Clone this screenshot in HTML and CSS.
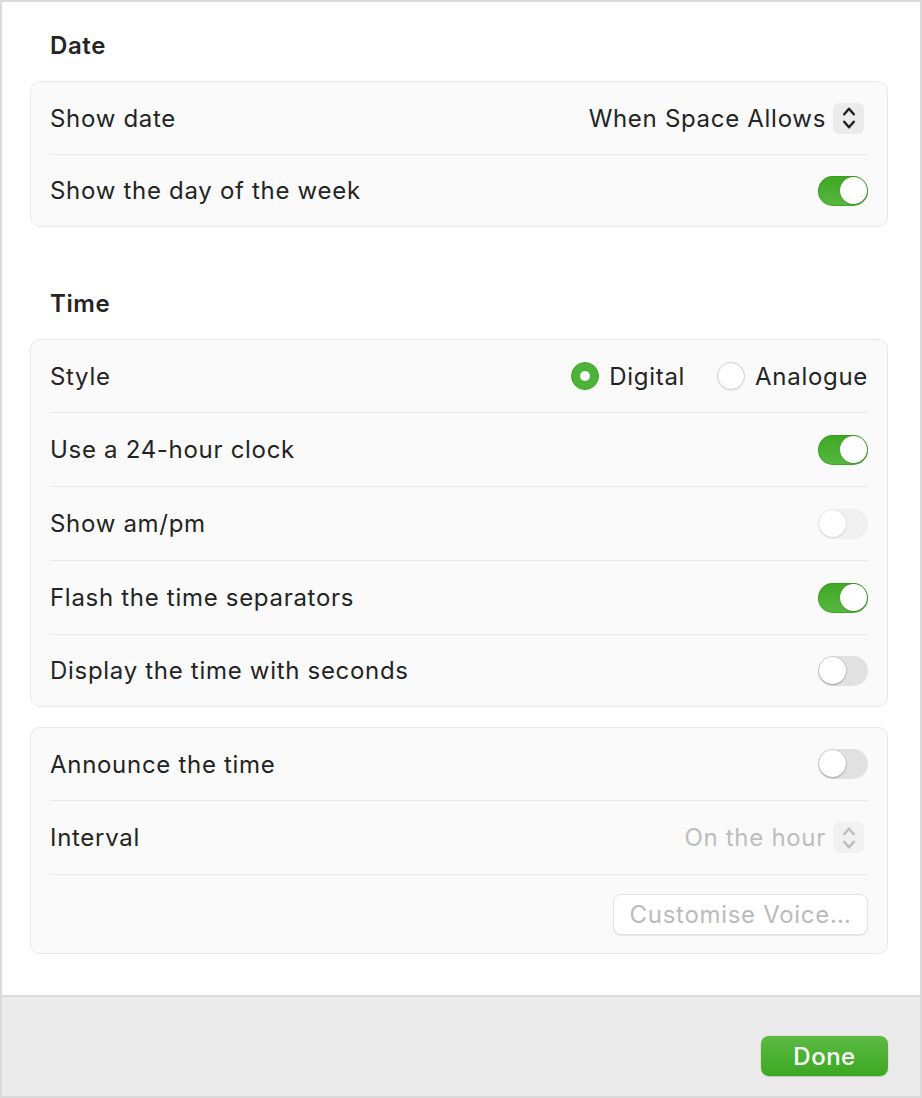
FILE: index.html
```html
<!DOCTYPE html>
<html lang="en">
<head>
	<meta charset="UTF-8">
	<title>Clock Options</title>
	<link rel="stylesheet" href="styles.css">
</head>
<body>
	<div class="window">
		<div class="content">
			<h2 class="section-title">Date</h2>
			<div class="group">
				<div class="row">
					<span class="label">Show date</span>
					<div class="popup">
						<span>When Space Allows</span>
						<span class="stepper">
							<svg width="14" height="24" viewBox="0 0 14 24"><path d="M2.2 8.3 L7 2.8 L11.8 8.3 M2.2 15.7 L7 21.2 L11.8 15.7" fill="none" stroke="currentColor" stroke-width="2.5" stroke-linecap="round" stroke-linejoin="round"/></svg>
						</span>
					</div>
				</div>
				<div class="row">
					<span class="label">Show the day of the week</span>
					<span class="toggle on"></span>
				</div>
			</div>

			<h2 class="section-title">Time</h2>
			<div class="group">
				<div class="row">
					<span class="label">Style</span>
					<div class="radios">
						<label class="radio checked"><span class="dot"></span>Digital</label>
						<label class="radio"><span class="dot"></span>Analogue</label>
					</div>
				</div>
				<div class="row">
					<span class="label">Use a 24-hour clock</span>
					<span class="toggle on"></span>
				</div>
				<div class="row">
					<span class="label">Show am/pm</span>
					<span class="toggle disabled"></span>
				</div>
				<div class="row">
					<span class="label">Flash the time separators</span>
					<span class="toggle on"></span>
				</div>
				<div class="row">
					<span class="label">Display the time with seconds</span>
					<span class="toggle"></span>
				</div>
			</div>

			<div class="group">
				<div class="row">
					<span class="label">Announce the time</span>
					<span class="toggle"></span>
				</div>
				<div class="row">
					<span class="label">Interval</span>
					<div class="popup disabled">
						<span>On the hour</span>
						<span class="stepper">
							<svg width="14" height="24" viewBox="0 0 14 24"><path d="M2.2 8.3 L7 2.8 L11.8 8.3 M2.2 15.7 L7 21.2 L11.8 15.7" fill="none" stroke="currentColor" stroke-width="2.5" stroke-linecap="round" stroke-linejoin="round"/></svg>
						</span>
					</div>
				</div>
				<div class="row row-button">
					<button class="btn" disabled>Customise Voice…</button>
				</div>
			</div>
		</div>
		<div class="footer">
			<button class="btn-done">Done</button>
		</div>
	</div>
</body>
</html>
```

FILE: styles.css
```css
*{
	margin: 0;
	padding: 0;
	box-sizing: border-box;
}
body{
	font-family: Inter, "Noto Sans", sans-serif;
	color: #242424;
	background: #fff;
}
.window{
	width: 922px;
	height: 1098px;
	border: 2px solid #dadada;
	display: flex;
	flex-direction: column;
}
.content{
	flex: 1;
	padding: 29px 32px 0 28px;
}
.section-title{
	font-size: 24px;
	font-weight: 600;
	line-height: 30px;
	letter-spacing: 0.6px;
	padding-left: 20px;
	margin-bottom: 20px;
}
.group + .section-title{
	margin-top: 62px;
}
.group{
	background: #fafafa;
	border: 1px solid #e9e9e9;
	border-radius: 10px;
}
.group + .group{
	margin-top: 20px;
}
.row{
	margin: 0 19px;
	height: 72px;
	display: flex;
	align-items: center;
	justify-content: space-between;
	font-size: 24px;
	letter-spacing: 0.7px;
}
.row + .row{
	height: 74px;
	border-top: 1px solid #e8e8e8;
}
.row:last-child{
	height: 72px;
}
.row.row-button{
	height: 79px;
	justify-content: flex-end;
}

/* popup button */
.popup{
	display: flex;
	align-items: center;
	gap: 7px;
	margin-right: 4px;
}
.stepper{
	width: 31px;
	height: 31px;
	border-radius: 6px;
	background: #ebebeb;
	display: flex;
	align-items: center;
	justify-content: center;
	color: #222;
}
.popup.disabled{
	color: #bdbdbd;
}
.popup.disabled .stepper{
	background: #f1f1f1;
	color: #bdbdbd;
}

/* toggles */
.toggle{
	width: 50px;
	height: 30px;
	border-radius: 15px;
	background: #e1e1e1;
	position: relative;
}
.toggle::after{
	content: '';
	position: absolute;
	left: 1px;
	top: 1px;
	width: 27px;
	height: 27px;
	border-radius: 50%;
	background: #fff;
	box-shadow: 0 0 0 0.5px rgba(0,0,0,.12), 0 1px 2px rgba(0,0,0,.25);
}
.toggle.on{
	background: linear-gradient(#3fa824, #56b83f);
	box-shadow: inset 0 0 0 1px rgba(40,140,20,.45);
}
.toggle.on::after{
	left: auto;
	right: 1px;
	box-shadow: 0 0 0 0.5px rgba(0,0,0,.08), 0 1px 1px rgba(0,0,0,.15);
}
.toggle.disabled{
	background: #f0f0f0;
}
.toggle.disabled::after{
	box-shadow: 0 0 0 0.5px rgba(0,0,0,.06), 0 1px 2px rgba(0,0,0,.1);
}

/* radios */
.radios{
	display: flex;
	gap: 32px;
}
.radio{
	display: flex;
	align-items: center;
	gap: 10px;
}
.radio .dot{
	width: 28px;
	height: 28px;
	border-radius: 50%;
	background: #fff;
	border: 1px solid #cfcfcf;
	box-shadow: 0 1px 1px rgba(0,0,0,.06);
	position: relative;
}
.radio.checked .dot{
	background: #4bb338;
	border-color: #45a932;
}
.radio.checked .dot::after{
	content: '';
	position: absolute;
	left: 8px;
	top: 8px;
	width: 10px;
	height: 10px;
	border-radius: 50%;
	background: #fff;
}

/* buttons */
.btn{
	width: 255px;
	height: 41px;
	font-family: inherit;
	font-size: 24px;
	letter-spacing: 0.7px;
	color: #bbb;
	background: #fff;
	border: 1px solid #e3e3e3;
	border-radius: 8px;
	box-shadow: 0 1px 1px rgba(0,0,0,.08);
}
.footer{
	height: 101px;
	background: #ebebeb;
	border-top: 2px solid #dcdcdc;
	display: flex;
	justify-content: flex-end;
	align-items: flex-end;
	padding: 0 32px 20px 0;
}
.btn-done{
	width: 127px;
	height: 40px;
	font-family: inherit;
	font-size: 24px;
	font-weight: 500;
	letter-spacing: 0.5px;
	color: #fff;
	background: linear-gradient(#5bba44, #3ca821);
	border: none;
	border-radius: 8px;
	box-shadow: 0 0 0 0.5px rgba(0,0,0,.1), 0 1px 1px rgba(0,0,0,.1);
}
```
